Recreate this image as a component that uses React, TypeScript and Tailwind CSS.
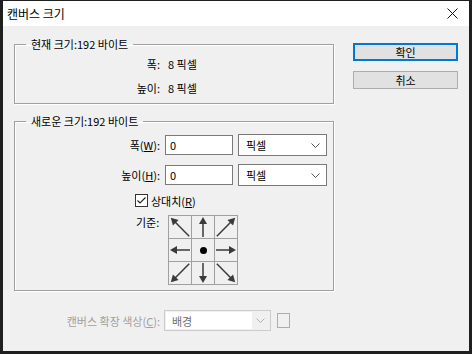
import React from 'react';

function Arrow({ angle, len }: { angle: number; len: number }) {
  const h = len / 2;
  return (
    <svg width="22" height="22" viewBox="0 0 22 22">
      <g transform={`rotate(${angle} 11 11)`}>
        <line x1="11" y1={11 + h} x2="11" y2={11 - h + 5} stroke="#3a3a3a" strokeWidth="1.5" />
        <polygon points={`11,${11 - h} 7,${11 - h + 7} 15,${11 - h + 7}`} fill="#3a3a3a" />
      </g>
    </svg>
  );
}

function Chevron({ color = '#555' }: { color?: string }) {
  return (
    <svg width="9" height="5" viewBox="0 0 9 5">
      <polyline points="0.5,0.5 4.5,4.5 8.5,0.5" fill="none" stroke={color} strokeWidth="1" />
    </svg>
  );
}

function UnitSelect() {
  return (
    <div className="w-[89px] h-[22px] border border-[#7a7a7a] bg-white flex items-center justify-between pl-[7px] pr-[6px]">
      <span>픽셀</span>
      <Chevron />
    </div>
  );
}

const anchors = [
  { angle: -45, len: 26 },
  { angle: 0, len: 20 },
  { angle: 45, len: 26 },
  { angle: -90, len: 20 },
  null,
  { angle: 90, len: 20 },
  { angle: -135, len: 26 },
  { angle: 180, len: 20 },
  { angle: 135, len: 26 },
];

export default function App() {
  return (
    <div className="w-[472px] h-[354px] bg-[#1f1f1f] pt-px px-[3px] pb-[3px] flex flex-col font-['Noto_Sans_CJK_KR','Liberation_Sans',sans-serif] text-[11px] leading-[16px] text-black">
      {/* title bar */}
      <div className="h-[25px] bg-white flex items-center justify-between pl-[4px] pr-[11px]">
        <span className="text-[12px]">캔버스 크기</span>
        <svg width="11" height="11" viewBox="0 0 11 11">
          <path d="M0.5 0.5 L10.5 10.5 M10.5 0.5 L0.5 10.5" stroke="#111" strokeWidth="1" />
        </svg>
      </div>

      <div className="flex-1 bg-[#f0f0f0] flex pl-[11px]">
        <div className="w-[320px] flex flex-col pt-[10px]">
          {/* current size */}
          <fieldset className="border border-[#a0a0a0] shadow-[inset_1px_1px_0_#fff,1px_1px_0_#fff] pb-[3px]">
            <legend className="ml-[11px] px-[5px]">현재 크기:192 바이트</legend>
            <div className="grid grid-cols-[145px_1fr] gap-x-[8px]">
              <div className="h-[24px] flex items-center justify-end">폭:</div>
              <div className="h-[24px] flex items-center">8 픽셀</div>
              <div className="h-[24px] flex items-center justify-end">높이:</div>
              <div className="h-[24px] flex items-center">8 픽셀</div>
            </div>
          </fieldset>

          {/* new size */}
          <fieldset className="mt-[9px] border border-[#a0a0a0] shadow-[inset_1px_1px_0_#fff,1px_1px_0_#fff] pb-[5px]">
            <legend className="ml-[11px] px-[5px]">새로운 크기:192 바이트</legend>
            <div className="pt-[5px] flex flex-col gap-[8px]">
              <div className="flex items-center">
                <div className="w-[145px] text-right">
                  폭(<span className="underline">W</span>):
                </div>
                <div className="ml-[5px] w-[68px] h-[20px] border border-[#7a7a7a] bg-white flex items-center pl-[4px]">0</div>
                <div className="ml-[5px]">
                  <UnitSelect />
                </div>
              </div>
              <div className="flex items-center">
                <div className="w-[145px] text-right">
                  높이(<span className="underline">H</span>):
                </div>
                <div className="ml-[5px] w-[68px] h-[20px] border border-[#7a7a7a] bg-white flex items-center pl-[4px]">0</div>
                <div className="ml-[5px]">
                  <UnitSelect />
                </div>
              </div>
              <div className="flex items-center pl-[120px] h-[13px]">
                <div className="w-[13px] h-[13px] border border-[#333] bg-white flex items-center justify-center">
                  <svg width="11" height="11" viewBox="0 0 11 11">
                    <polyline points="1.5,5.5 4,8 9.5,2.5" fill="none" stroke="#222" strokeWidth="1.2" />
                  </svg>
                </div>
                <span className="ml-[3px]">
                  상대치(<span className="underline">R</span>)
                </span>
              </div>
              <div className="flex pl-[121px]">
                <span className="w-[32px] -mt-[1px]">기준:</span>
                <div className="grid grid-cols-3 border-l border-t border-[#a0a0a0]">
                  {anchors.map((a, i) => (
                    <div key={i} className="w-[23px] h-[23px] border-r border-b border-[#a0a0a0] flex items-center justify-center">
                      {a ? (
                        <Arrow angle={a.angle} len={a.len} />
                      ) : (
                        <div className="w-[7px] h-[7px] rounded-full bg-black" />
                      )}
                    </div>
                  ))}
                </div>
              </div>
            </div>
          </fieldset>

          {/* extension color */}
          <div className="mt-[19px] flex items-center">
            <div className="w-[146px] text-right text-[#a0a0a0]">
              캔버스 확장 색상(<span className="underline">C</span>):
            </div>
            <div className="ml-[4px] w-[107px] h-[21px] border border-[#cccccc] bg-[#f0f0f0] flex p-px">
              <div className="flex-1 bg-white flex items-center pl-[6px] text-[#6d6d6d]">배경</div>
              <div className="w-[17px] flex items-center justify-center">
                <Chevron color="#b0b0b0" />
              </div>
            </div>
            <div className="ml-[6px] w-[13px] h-[15px] border border-[#adadad]" />
          </div>
        </div>

        {/* buttons */}
        <div className="ml-[19px] w-[105px] flex flex-col gap-[10px] pt-[17px]">
          <button className="h-[18px] border-2 border-[#0078d7] bg-[#e1e1e1] flex items-center justify-center">확인</button>
          <button className="h-[18px] border border-[#adadad] bg-[#e1e1e1] flex items-center justify-center">취소</button>
        </div>
      </div>
    </div>
  );
}
